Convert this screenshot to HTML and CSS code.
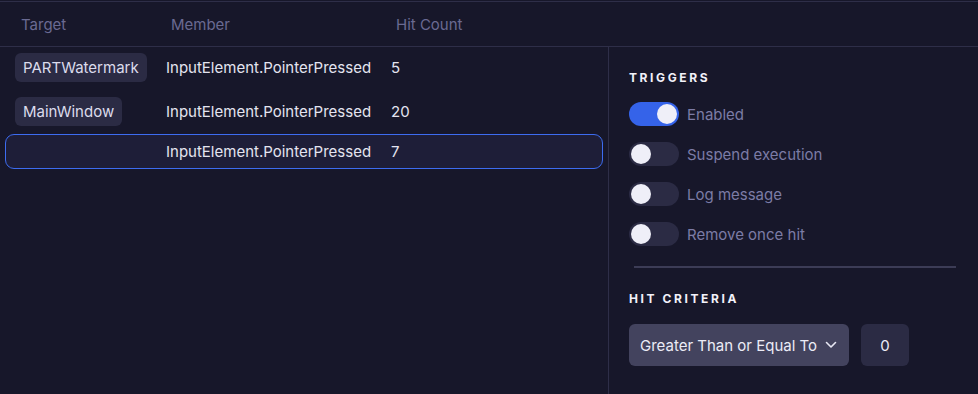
FILE: index.html
```html
<!DOCTYPE html>
<html>
<head>
<meta charset="utf-8">
<link rel="stylesheet" href="styles.css">
</head>
<body>
<div class="app">
  <div class="header">
    <div class="hcell c-target">Target</div>
    <div class="hcell c-member">Member</div>
    <div class="hcell c-hits">Hit Count</div>
  </div>
  <div class="main">
    <div class="list">
      <div class="row">
        <div class="cell c-target"><span class="pill">PARTWatermark</span></div>
        <div class="cell c-member">InputElement.PointerPressed</div>
        <div class="cell c-hits">5</div>
      </div>
      <div class="row">
        <div class="cell c-target"><span class="pill">MainWindow</span></div>
        <div class="cell c-member">InputElement.PointerPressed</div>
        <div class="cell c-hits">20</div>
      </div>
      <div class="row selected">
        <div class="cell c-target"></div>
        <div class="cell c-member">InputElement.PointerPressed</div>
        <div class="cell c-hits">7</div>
      </div>
    </div>
    <div class="side">
      <div class="section-title">TRIGGERS</div>
      <div class="toggles">
        <div class="trow"><span class="toggle on"><span class="knob"></span></span><span class="tlabel">Enabled</span></div>
        <div class="trow"><span class="toggle"><span class="knob"></span></span><span class="tlabel">Suspend execution</span></div>
        <div class="trow"><span class="toggle"><span class="knob"></span></span><span class="tlabel">Log message</span></div>
        <div class="trow"><span class="toggle"><span class="knob"></span></span><span class="tlabel">Remove once hit</span></div>
      </div>
      <div class="divider"></div>
      <div class="section-title">HIT CRITERIA</div>
      <div class="criteria">
        <div class="select">
          <span>Greater Than or Equal To</span>
          <svg class="chev" width="12" height="8" viewBox="0 0 12 8"><path d="M1.5 1.5 L6 6 L10.5 1.5" fill="none" stroke="#e8e8f4" stroke-width="1.6" stroke-linecap="round" stroke-linejoin="round"/></svg>
        </div>
        <div class="numbox">0</div>
      </div>
    </div>
  </div>
</div>
</body>
</html>
```
FILE: styles.css
```css
* { box-sizing: border-box; }
html, body { margin: 0; padding: 0; }
body {
  background: #17172a;
  font-family: Inter, "Noto Sans", sans-serif;
  font-size: 15px;
  color: #e4e4f0;
  width: 978px;
  height: 394px;
  overflow: hidden;
}
.app {
  height: 394px;
  display: flex;
  flex-direction: column;
  border-top: 1px solid #2e2e48;
  border-bottom: 1px solid #2e2e48;
  margin-top: 1px;
}
.header {
  height: 45px;
  flex: none;
  display: flex;
  align-items: center;
  border-bottom: 1px solid #2e2e48;
  color: #6a6a92;
  padding-top: 1px;
}
.header .c-target { padding-left: 21px; width: 171px; }
.header .c-member { width: 225px; }
.main {
  flex: 1;
  display: flex;
  min-height: 0;
}
.list {
  width: 609px;
  border-right: 1px solid #2e2e48;
  padding: 2px 5px 0 5px;
  display: flex;
  flex-direction: column;
  gap: 8px;
}
.row {
  height: 36px;
  display: flex;
  align-items: center;
  border: 1px solid transparent;
  border-radius: 9px;
}
.row.selected {
  height: 35px;
  margin-top: -3px;
  background: #1e1e38;
  border-color: #3d6cf0;
}
.cell.c-target { width: 160px; padding-left: 9px; }
.cell.c-member { width: 225px; }
.pill {
  display: inline-block;
  background: #2b2b44;
  border-radius: 6px;
  padding: 0 8px;
  height: 29px;
  line-height: 29px;
  color: #dcdcec;
}
.side {
  flex: 1;
  padding: 23px 21px 0 20px;
  display: flex;
  flex-direction: column;
}
.section-title {
  font-size: 12px;
  font-weight: 700;
  letter-spacing: 2.6px;
  color: #f2f2fa;
  height: 16px;
  line-height: 16px;
}
.toggles {
  margin-top: 16px;
  display: flex;
  flex-direction: column;
  gap: 16px;
}
.trow {
  display: flex;
  align-items: center;
  gap: 8px;
  height: 24px;
}
.toggle {
  width: 50px;
  height: 24px;
  border-radius: 12px;
  background: #2b2b44;
  position: relative;
  flex: none;
}
.toggle.on { background: #3563e9; }
.knob {
  position: absolute;
  top: 2px;
  left: 2px;
  width: 20px;
  height: 20px;
  border-radius: 50%;
  background: #efeff8;
}
.toggle.on .knob { left: 28px; }
.tlabel { color: #7c7ca6; }
.divider {
  height: 2px;
  background: #3c3c56;
  margin: 20px 1px 0 5px;
}
.section-title + .criteria { margin-top: 17px; }
.divider + .section-title { margin-top: 23px; }
.criteria {
  display: flex;
  gap: 12px;
}
.select {
  width: 220px;
  height: 42px;
  border-radius: 6px;
  background: #43435e;
  display: flex;
  align-items: center;
  justify-content: space-between;
  padding: 0 12px 0 11px;
  color: #ececf6;
}
.numbox {
  width: 48px;
  height: 42px;
  border-radius: 6px;
  background: #2b2b44;
  display: flex;
  align-items: center;
  justify-content: center;
  color: #ececf6;
}
```
